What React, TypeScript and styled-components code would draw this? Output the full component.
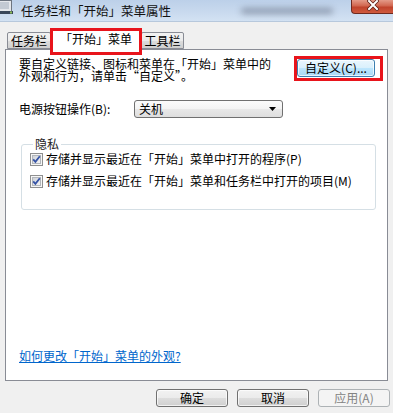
import styled, { createGlobalStyle } from 'styled-components'

const GlobalStyle = createGlobalStyle`
  html, body {
    margin: 0;
    padding: 0;
    background: #f0f0f0;
  }
  body {
    font-family: 'Noto Sans CJK SC', 'Noto Sans', sans-serif;
    font-size: 12px;
    color: #000;
  }
`

const Window = styled.div`
  width: 393px;
  height: 413px;
  display: flex;
  flex-direction: column;
  overflow: hidden;
  background: #f0f0f0;
`

const TitleBar = styled.div`
  height: 22px;
  flex: none;
  display: flex;
  align-items: center;
  box-sizing: border-box;
  background: linear-gradient(180deg, #bcd0e9 0%, #c8d9ee 55%, #d3e2f3 100%);
  border-bottom: 1px solid #b7c8dc;
`

const TitleIcon = styled.svg`
  flex: none;
  align-self: flex-start;
  margin-right: 8px;
`

const TitleText = styled.span`
  line-height: 14px;
  font-size: 12.5px;
  color: #111;
`

const Smudge = styled.div`
  margin-left: auto;
  width: 92px;
  height: 6px;
  border-radius: 4px;
  background: rgba(70, 80, 100, 0.45);
  filter: blur(3px);
`

const CloseButton = styled.div`
  align-self: flex-start;
  margin-left: 18px;
  width: 42px;
  height: 14px;
  box-sizing: border-box;
  border: 1px solid #6e2a20;
  border-top: none;
  border-right: none;
  border-radius: 0 0 0 4px;
  background: linear-gradient(180deg, #e49a88 0%, #d1664f 45%, #c0432c 55%, #cf5a3e 100%);
  display: flex;
  justify-content: center;
  align-items: flex-start;
`

const Body = styled.div`
  flex: 1;
  display: flex;
  flex-direction: column;
  padding: 7px 5px 0 5px;
`

const TabStrip = styled.div`
  display: flex;
  align-items: flex-end;
  height: 20px;
  padding-left: 2px;
`

const Tab = styled.div<{ $active?: boolean; $width: number }>`
  position: relative;
  width: ${(p) => p.$width}px;
  height: ${(p) => (p.$active ? 21 : 17)}px;
  margin-bottom: ${(p) => (p.$active ? -1 : 0)}px;
  box-sizing: border-box;
  border: 1px solid #898c95;
  border-bottom: ${(p) => (p.$active ? 'none' : '1px solid #898c95')};
  border-radius: 2px 2px 0 0;
  background: ${(p) =>
    p.$active ? '#fff' : 'linear-gradient(180deg, #f2f2f2 0%, #ebebeb 50%, #dddddd 51%, #cfcfcf 100%)'};
  z-index: ${(p) => (p.$active ? 2 : 1)};
  display: flex;
  justify-content: center;
  align-items: center;
  font-size: 12px;
  line-height: 14px;
  padding-bottom: ${(p) => (p.$active ? 2 : 0)}px;
`

const Highlight = styled.div<{ $inset: string }>`
  position: absolute;
  inset: ${(p) => p.$inset};
  border: 3px solid #e8141b;
  pointer-events: none;
  z-index: 5;
`

const Panel = styled.div`
  height: 332px;
  box-sizing: border-box;
  border: 1px solid #898c95;
  background: #fff;
  display: flex;
  flex-direction: column;
  padding: 8px 12px 17px 13px;
`

const IntroRow = styled.div`
  display: flex;
  justify-content: space-between;
  align-items: flex-start;
`

const IntroText = styled.div`
  width: 256px;
  line-height: 12px;
`

const HotWrap = styled.div`
  position: relative;
  margin-top: 1px;
`

const PushButton = styled.button<{ $hot?: boolean; $width: number }>`
  width: ${(p) => p.$width}px;
  height: 18px;
  padding: 0;
  box-sizing: border-box;
  font-family: inherit;
  font-size: 12px;
  line-height: 14px;
  border-radius: 3px;
  border: 1px solid ${(p) => (p.$hot ? '#3c7fb1' : '#707070')};
  color: #000;
  background: ${(p) =>
    p.$hot
      ? 'linear-gradient(180deg, #eaf6fd 0%, #d9f0fc 50%, #bee6fd 51%, #a7d9f5 100%)'
      : 'linear-gradient(180deg, #f2f2f2 0%, #ebebeb 50%, #dddddd 51%, #cfcfcf 100%)'};
  box-shadow: inset 0 0 0 1px rgba(255, 255, 255, 0.7);
  &:disabled {
    border-color: #adb2b5;
    background: #f4f4f4;
    color: #838383;
    box-shadow: none;
  }
`

const FieldRow = styled.div`
  display: flex;
  align-items: center;
  margin-top: 18px;
`

const FieldLabel = styled.span`
  width: 115px;
  line-height: 14px;
`

const Select = styled.div`
  width: 149px;
  height: 18px;
  box-sizing: border-box;
  border: 1px solid #707070;
  border-radius: 3px;
  background: linear-gradient(180deg, #fbfbfb 0%, #f3f3f3 50%, #e8e8e8 51%, #dedede 100%);
  display: flex;
  align-items: center;
  justify-content: space-between;
  padding: 0 6px 0 4px;
  line-height: 14px;
`

const Group = styled.fieldset`
  margin: 20px 0 0 2px;
  width: 355px;
  height: 72px;
  box-sizing: border-box;
  border: 1px solid #d5dfe5;
  border-radius: 3px;
  padding: 2px 0 0 8px;
  display: flex;
  flex-direction: column;
  gap: 8px;
`

const Legend = styled.legend`
  padding: 0 2px;
  margin-left: 3px;
  line-height: 12px;
  color: #222;
`

const CheckRow = styled.label`
  display: flex;
  align-items: center;
  gap: 3px;
  line-height: 14px;
`

const HelpLink = styled.a`
  margin-top: auto;
  color: #0066cc;
  text-decoration: underline;
  line-height: 14px;
  cursor: pointer;
`

const ButtonRow = styled.div`
  display: flex;
  justify-content: flex-end;
  gap: 9px;
  margin: 8px -2px 0 0;
`

const CheckMark = () => (
  <svg width="13" height="13" viewBox="0 0 13 13">
    <defs>
      <linearGradient id="cbInner" x1="0" y1="0" x2="1" y2="1">
        <stop offset="0" stopColor="#cbcfd5" />
        <stop offset="1" stopColor="#f7f7f7" />
      </linearGradient>
    </defs>
    <rect x="0.5" y="0.5" width="12" height="12" fill="#f6f6f6" stroke="#8e8f8f" />
    <rect x="2.5" y="2.5" width="8" height="8" fill="url(#cbInner)" stroke="#b2b6bb" />
    <path d="M3.2 6.4 L5.4 8.9 L9.8 3.2" stroke="#3553a6" strokeWidth="1.8" fill="none" />
  </svg>
)

export default function App() {
  return (
    <Window>
      <GlobalStyle />
      <TitleBar>
        <TitleIcon width="13" height="16" viewBox="0 0 13 16">
          <rect x="-1.5" y="0.5" width="13" height="11" fill="#e4e7eb" stroke="#6d7580" />
          <rect x="0" y="2" width="9" height="7" fill="#c3cad3" />
          <rect x="-1" y="11" width="14" height="3" fill="#39475a" />
          <rect x="10" y="11.5" width="2" height="2" fill="#8fbf5a" />
        </TitleIcon>
        <TitleText>任务栏和「开始」菜单属性</TitleText>
        <Smudge />
        <CloseButton>
          <svg width="12" height="11" viewBox="0 0 12 11">
            <path d="M2 1 L10 9 M10 1 L2 9" stroke="#5a1a12" strokeWidth="3.4" strokeLinecap="square" />
            <path d="M2 1 L10 9 M10 1 L2 9" stroke="#fff" strokeWidth="2" strokeLinecap="square" />
          </svg>
        </CloseButton>
      </TitleBar>
      <Body>
        <TabStrip>
          <Tab $width={44}>任务栏</Tab>
          <Tab $width={90} $active>
            「开始」菜单
            <Highlight $inset="-2px -2px -5px -2px" />
          </Tab>
          <Tab $width={43}>工具栏</Tab>
        </TabStrip>
        <Panel>
          <IntroRow>
            <IntroText>要自定义链接、图标和菜单在「开始」菜单中的外观和行为，请单击“自定义”。</IntroText>
            <HotWrap>
              <PushButton $hot $width={78}>自定义(C)...</PushButton>
              <Highlight $inset="-3px -8px -4px -3px" />
            </HotWrap>
          </IntroRow>
          <FieldRow>
            <FieldLabel>电源按钮操作(B):</FieldLabel>
            <Select>
              <span>关机</span>
              <svg width="7" height="4" viewBox="0 0 7 4">
                <path d="M0 0 H7 L3.5 4 Z" fill="#000" />
              </svg>
            </Select>
          </FieldRow>
          <Group>
            <Legend>隐私</Legend>
            <CheckRow>
              <CheckMark />
              存储并显示最近在「开始」菜单中打开的程序(P)
            </CheckRow>
            <CheckRow>
              <CheckMark />
              存储并显示最近在「开始」菜单和任务栏中打开的项目(M)
            </CheckRow>
          </Group>
          <HelpLink>如何更改「开始」菜单的外观?</HelpLink>
        </Panel>
        <ButtonRow>
          <PushButton $width={72}>确定</PushButton>
          <PushButton $width={72}>取消</PushButton>
          <PushButton $width={72} disabled>应用(A)</PushButton>
        </ButtonRow>
      </Body>
    </Window>
  )
}
